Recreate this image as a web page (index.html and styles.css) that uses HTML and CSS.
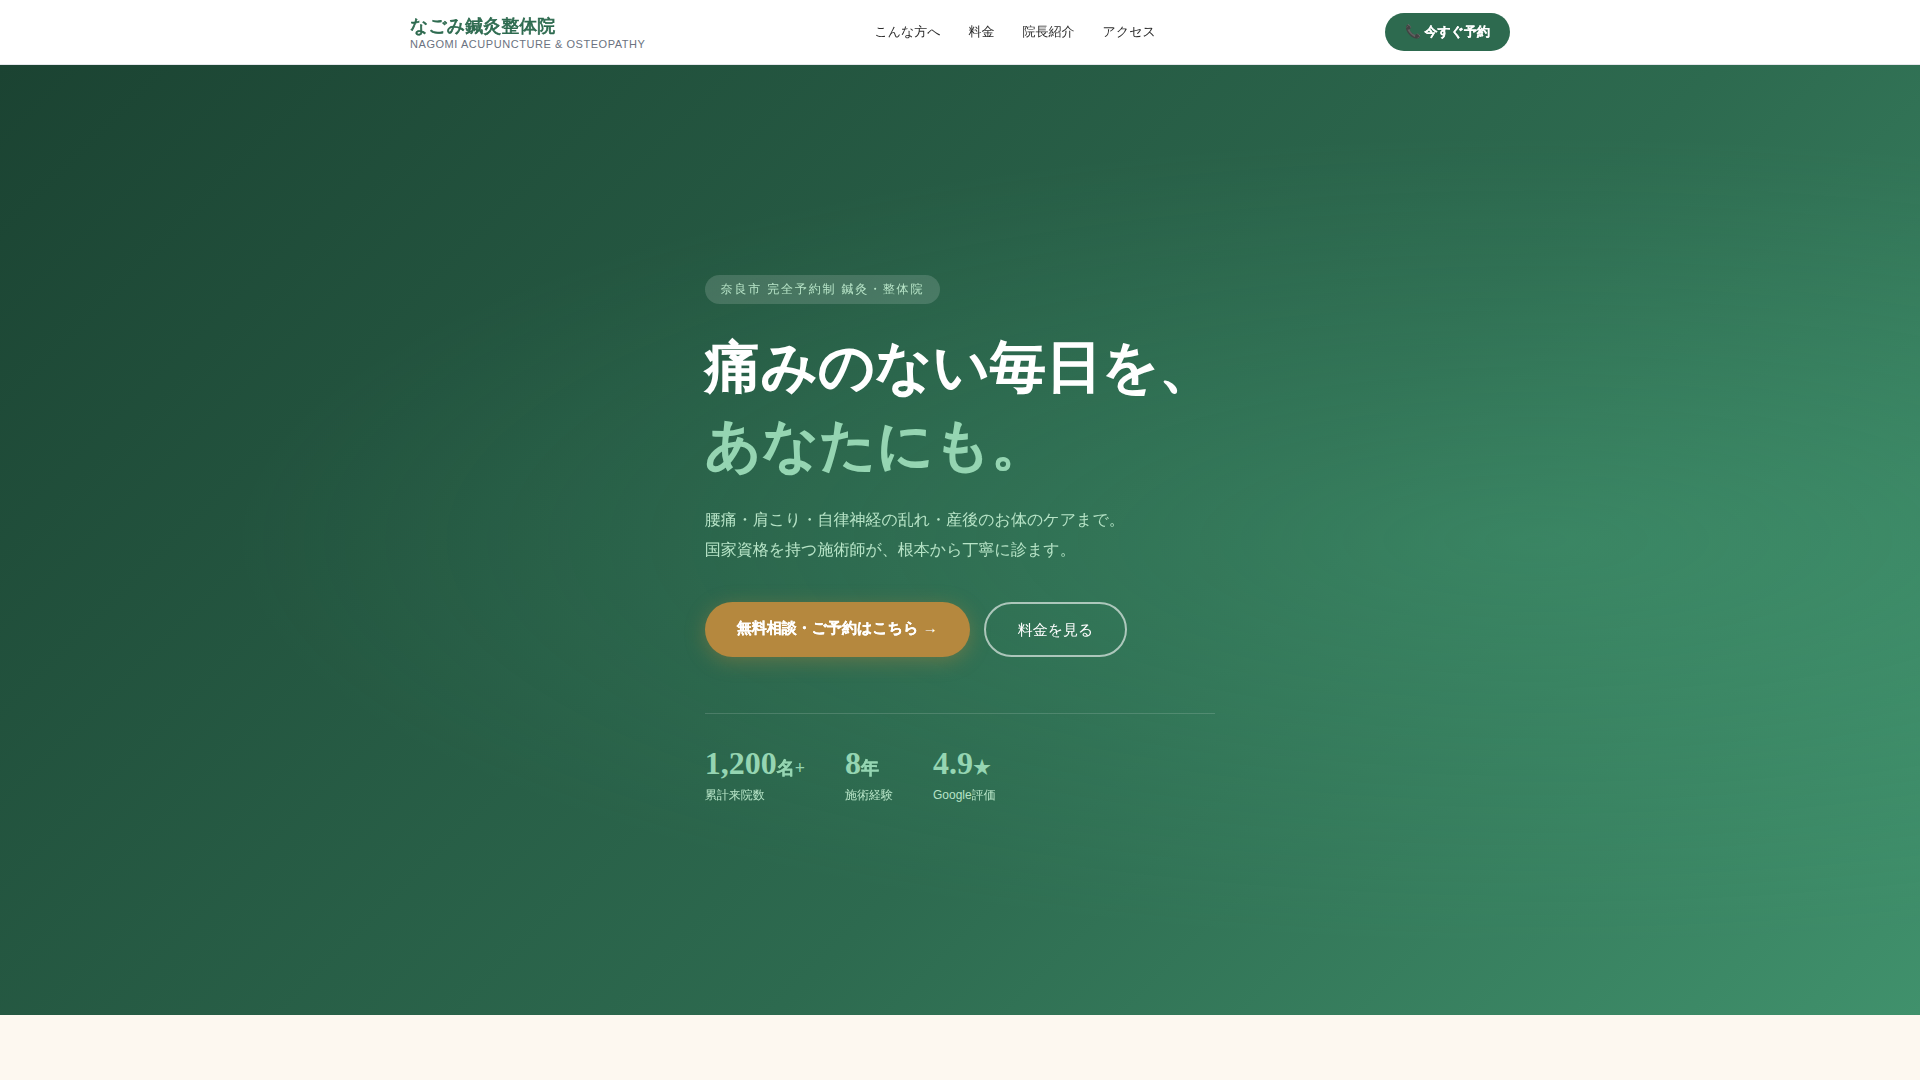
FILE: index.html
```html
<!DOCTYPE html>
<html lang="ja">
<head>
<meta charset="UTF-8">
<meta name="viewport" content="width=device-width, initial-scale=1">
<title>なごみ鍼灸整体院</title>
<link rel="stylesheet" href="styles.css">
</head>
<body>
<header class="header">
  <div class="header-inner">
    <div class="logo">
      <span class="logo-name">なごみ鍼灸整体院</span>
      <span class="logo-sub">NAGOMI ACUPUNCTURE &amp; OSTEOPATHY</span>
    </div>
    <nav class="nav">
      <a href="#symptoms">こんな方へ</a>
      <a href="#price">料金</a>
      <a href="#profile">院長紹介</a>
      <a href="#access">アクセス</a>
    </nav>
    <a class="header-cta" href="#contact">📞 <b>今すぐ予約</b></a>
  </div>
</header>
<main>
  <section class="hero">
    <div class="hero-content">
      <span class="badge">奈良市 完全予約制 鍼灸・整体院</span>
      <h1>痛みのない毎日を、<br><em>あなたにも。</em></h1>
      <p class="lead">腰痛・肩こり・自律神経の乱れ・産後のお体のケアまで。<br>国家資格を持つ施術師が、根本から丁寧に診ます。</p>
      <div class="actions">
        <a class="btn btn-primary" href="#contact"><b>無料相談・ご予約はこちら</b> →</a>
        <a class="btn btn-outline" href="#price">料金を見る</a>
      </div>
      <div class="stats">
        <div class="stat"><p class="stat-num">1,200<span><b>名</b>+</span></p><p class="stat-label">累計来院数</p></div>
        <div class="stat"><p class="stat-num">8<span><b>年</b></span></p><p class="stat-label">施術経験</p></div>
        <div class="stat"><p class="stat-num">4.9<span class="star">★</span></p><p class="stat-label">Google評価</p></div>
      </div>
    </div>
  </section>
  <section class="symptoms" id="symptoms"></section>
</main>
</body>
</html>
```
FILE: styles.css
```css
:root {
  --sans: "Liberation Sans", "WenQuanYi Zen Hei", "Noto Sans CJK JP", sans-serif;
  --serif: "Liberation Serif", "WenQuanYi Zen Hei", "Noto Sans CJK JP", serif;
}
* { box-sizing: border-box; margin: 0; padding: 0; }
html { scrollbar-width: none; }
body {
  font-family: var(--sans);
  color: #2c2c2c;
  background: #fdf8f0;
  line-height: 1.8;
}
a { color: inherit; text-decoration: none; }
/* The Japanese face has one weight, so bold text is thickened with a stroke. */
h1, .logo-name { -webkit-text-stroke: 0.04em currentColor; }
b { -webkit-text-stroke: 0.01em currentColor; }
.header {
  position: sticky;
  top: 0;
  z-index: 10;
  background: #fff;
  border-bottom: 1px solid #e5e7eb;
}
.header-inner {
  max-width: 1100px;
  height: 64px;
  margin: 0 auto;
  display: flex;
  align-items: center;
  justify-content: space-between;
}
.logo { display: flex; flex-direction: column; }
.logo-name {
  font-family: var(--serif);
  font-size: 18px;
  font-weight: 700;
  line-height: 24px;
  color: #2d6a4f;
}
.logo-sub { font-size: 11px; line-height: 12px; letter-spacing: 0.05em; color: #6b7280; }
.nav { display: flex; gap: 28px; font-size: 13px; }
.header-cta {
  padding: 7px 20px;
  border-radius: 24px;
  background: #2d6a4f;
  color: #fff;
  font-size: 13px;
  font-weight: 700;
}
.hero {
  min-height: 88vh;
  display: flex;
  align-items: center;
  justify-content: center;
  background:
    radial-gradient(ellipse at 80% 50%, rgba(82, 183, 136, 0.25) 0%, transparent 60%),
    linear-gradient(135deg, #1b4332 0%, #2d6a4f 60%, #40916c 100%);
}
.badge {
  display: inline-block;
  padding: 4px 16px;
  border-radius: 20px;
  background: rgba(255, 255, 255, 0.15);
  color: #b7e4c7;
  font-size: 12px;
  line-height: 21px;
  letter-spacing: 0.15em;
  margin-bottom: 24px;
}
h1 {
  margin-bottom: 20px;
  font-family: var(--serif);
  font-size: 56px;
  line-height: 1.4;
  color: #fff;
}
h1 em { font-style: normal; color: #95d5b2; }
.lead { margin-bottom: 36px; color: #b7e4c7; font-size: 16px; line-height: 1.9; }
.actions { display: flex; flex-wrap: wrap; gap: 14px; }
.btn { padding: 12px 32px; border-radius: 40px; font-size: 15px; color: #fff; }
.btn-primary {
  background: #b5883e;
  font-weight: 700;
  box-shadow: 0 4px 20px rgba(181, 136, 62, 0.4);
}
.btn-outline { border: 2px solid rgba(255, 255, 255, 0.6); }
.stats {
  display: flex;
  gap: 40px;
  margin-top: 56px;
  padding-top: 32px;
  border-top: 1px solid rgba(255, 255, 255, 0.15);
}
.stat-num {
  font-family: var(--serif);
  font-size: 32px;
  font-weight: 700;
  line-height: 1.1;
  color: #95d5b2;
}
.stat-num span { font-size: 18px; line-height: 1; }
.stat-num .star { font-family: "Noto Sans CJK JP", sans-serif; }
.stat-label { margin-top: 4px; font-size: 12px; color: #b7e4c7; }
.symptoms { min-height: 80px; }
```
